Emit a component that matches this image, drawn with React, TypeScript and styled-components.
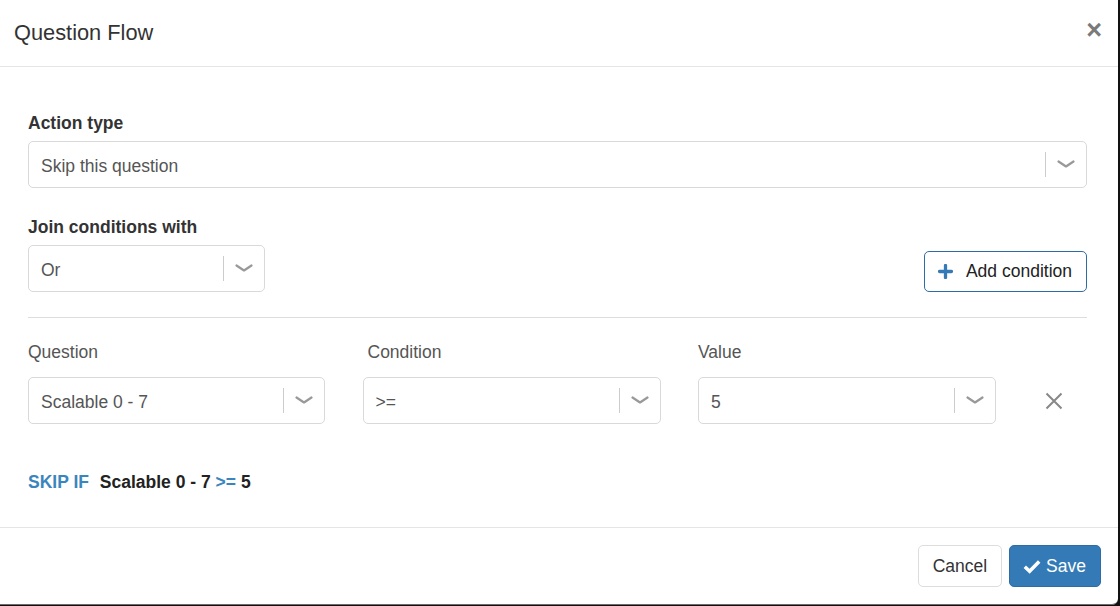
import React from 'react';
import styled, { createGlobalStyle } from 'styled-components';

const GlobalStyle = createGlobalStyle`
  html, body {
    margin: 0;
    padding: 0;
    background: #111;
  }
  body {
    font-family: "Liberation Sans", Arial, Helvetica, sans-serif;
    font-size: 17.5px;
    color: #333;
  }
  * {
    box-sizing: border-box;
  }
`;

const Modal = styled.div`
  width: 1118px;
  height: 605px;
  background: #fff;
  border-bottom: 1px solid #6b6b6b;
  border-bottom-right-radius: 6px;
  display: flex;
  flex-direction: column;
  overflow: hidden;
`;

const Header = styled.div`
  height: 67px;
  flex-shrink: 0;
  border-bottom: 1px solid #e5e5e5;
  display: flex;
  align-items: center;
  justify-content: space-between;
  padding: 0 16px 0 14px;
`;

const Title = styled.h4`
  margin: 0;
  font-size: 21.8px;
  font-weight: normal;
  color: #333;
`;

const CloseButton = styled.button`
  border: 0;
  background: transparent;
  padding: 0;
  margin-top: -6px;
  font-family: "Liberation Sans", Arial, sans-serif;
  font-size: 27px;
  font-weight: bold;
  line-height: 1;
  color: #7a7a7a;
  cursor: pointer;
`;

const Body = styled.div`
  flex: 1;
  padding: 44px 31px 0 28px;
`;

const Label = styled.div<{ $plain?: boolean }>`
  line-height: 25px;
  font-weight: ${({ $plain }) => ($plain ? 'normal' : 'bold')};
  color: ${({ $plain }) => ($plain ? '#555' : '#333')};
  margin-bottom: ${({ $plain }) => ($plain ? '12px' : '5px')};
`;

const FormGroup = styled.div`
  margin-bottom: 27px;
`;

const JoinRow = styled.div`
  display: flex;
  align-items: flex-end;
  justify-content: space-between;
`;

const SelectBox = styled.div<{ $width?: string }>`
  width: ${({ $width }) => $width ?? '100%'};
  height: 47px;
  border: 1px solid #d9d9d9;
  border-radius: 5px;
  display: flex;
  align-items: center;
  background: #fff;
`;

const SelectValue = styled.div`
  flex: 1;
  padding: 3px 0 0 12px;
  color: #555;
  white-space: nowrap;
`;

const Separator = styled.span`
  width: 1px;
  height: 25px;
  background: #ccc;
`;

const Indicator = styled.span`
  width: 40px;
  display: flex;
  align-items: center;
  justify-content: center;
  color: #999;
`;

const OutlineButton = styled.button`
  height: 41px;
  padding: 0 14px 0 13px;
  border: 1px solid #2e6da4;
  border-radius: 5px;
  background: #fff;
  color: #222;
  font-family: inherit;
  font-size: 17.5px;
  display: flex;
  align-items: center;
  gap: 13px;
`;

const Divider = styled.hr`
  border: 0;
  border-top: 1px solid #ddd;
  margin: 25px 0 22px;
`;

const ConditionGrid = styled.div`
  display: grid;
  grid-template-columns: 297px 298px 298px 1fr;
  column-gap: 37.5px;
  align-items: end;
`;

const RemoveButton = styled.button`
  border: 0;
  background: transparent;
  height: 47px;
  padding: 0;
  margin-left: 3px;
  width: 35px;
  display: flex;
  align-items: center;
  justify-content: center;
  color: #888;
`;

const Summary = styled.div`
  margin-top: 46px;
  line-height: 25px;
  font-weight: bold;
  color: #222;
`;

const Keyword = styled.span<{ $gap?: boolean }>`
  color: #3a85bd;
  margin-right: ${({ $gap }) => ($gap ? '6px' : '0')};
`;

const Footer = styled.div`
  height: 77px;
  flex-shrink: 0;
  border-top: 1px solid #e5e5e5;
  display: flex;
  justify-content: flex-end;
  align-items: flex-start;
  gap: 7px;
  padding: 17px 17px 0 0;
`;

const FooterButton = styled.button<{ $primary?: boolean }>`
  height: 42px;
  padding: ${({ $primary }) => ($primary ? '0 14px 0 13px' : '0 14px')};
  border-radius: 5px;
  border: 1px solid ${({ $primary }) => ($primary ? '#2e6da4' : '#ddd')};
  background: ${({ $primary }) => ($primary ? '#337ab7' : '#fff')};
  color: ${({ $primary }) => ($primary ? '#fff' : '#333')};
  font-family: inherit;
  font-size: 17.5px;
  display: flex;
  align-items: center;
  gap: 5px;
`;

const Chevron = () => (
  <svg width="18" height="9" viewBox="0 0 18 9" fill="none">
    <path d="M1.5 1.5 L9 6.5 L16.5 1.5" stroke="currentColor" strokeWidth="2.2" strokeLinecap="round" strokeLinejoin="round" />
  </svg>
);

const Select = ({ value, width }: { value: string; width?: string }) => (
  <SelectBox $width={width}>
    <SelectValue>{value}</SelectValue>
    <Separator />
    <Indicator>
      <Chevron />
    </Indicator>
  </SelectBox>
);

const PlusIcon = () => (
  <svg width="15" height="15" viewBox="0 0 15 15">
    <path d="M7.5 1.5 V13.5 M1.5 7.5 H13.5" stroke="#337ab7" strokeWidth="3.3" strokeLinecap="round" />
  </svg>
);

const CheckIcon = () => (
  <svg width="18" height="15" viewBox="0 0 18 15">
    <path d="M1.8 7.8 L6.6 12.3 L16.2 2.5" stroke="#fff" strokeWidth="3.5" fill="none" />
  </svg>
);

const CrossIcon = () => (
  <svg width="18" height="18" viewBox="0 0 18 18">
    <path d="M1.5 1.5 L16.5 16.5 M16.5 1.5 L1.5 16.5" stroke="currentColor" strokeWidth="2" />
  </svg>
);

export default function App() {
  return (
    <>
      <GlobalStyle />
      <Modal>
        <Header>
          <Title>Question Flow</Title>
          <CloseButton type="button">×</CloseButton>
        </Header>
        <Body>
          <FormGroup>
            <Label>Action type</Label>
            <Select value="Skip this question" />
          </FormGroup>
          <JoinRow>
            <div>
              <Label>Join conditions with</Label>
              <Select value="Or" width="237px" />
            </div>
            <OutlineButton type="button">
              <PlusIcon />
              Add condition
            </OutlineButton>
          </JoinRow>
          <Divider />
          <ConditionGrid>
            <div>
              <Label $plain>Question</Label>
              <Select value="Scalable 0 - 7" />
            </div>
            <div>
              <Label $plain style={{ paddingLeft: 5 }}>Condition</Label>
              <Select value=">=" />
            </div>
            <div>
              <Label $plain>Value</Label>
              <Select value="5" />
            </div>
            <RemoveButton type="button">
              <CrossIcon />
            </RemoveButton>
          </ConditionGrid>
          <Summary>
            <Keyword $gap>SKIP IF</Keyword> Scalable 0 - 7 <Keyword>&gt;=</Keyword> 5
          </Summary>
        </Body>
        <Footer>
          <FooterButton type="button">Cancel</FooterButton>
          <FooterButton type="button" $primary>
            <CheckIcon />
            Save
          </FooterButton>
        </Footer>
      </Modal>
    </>
  );
}
